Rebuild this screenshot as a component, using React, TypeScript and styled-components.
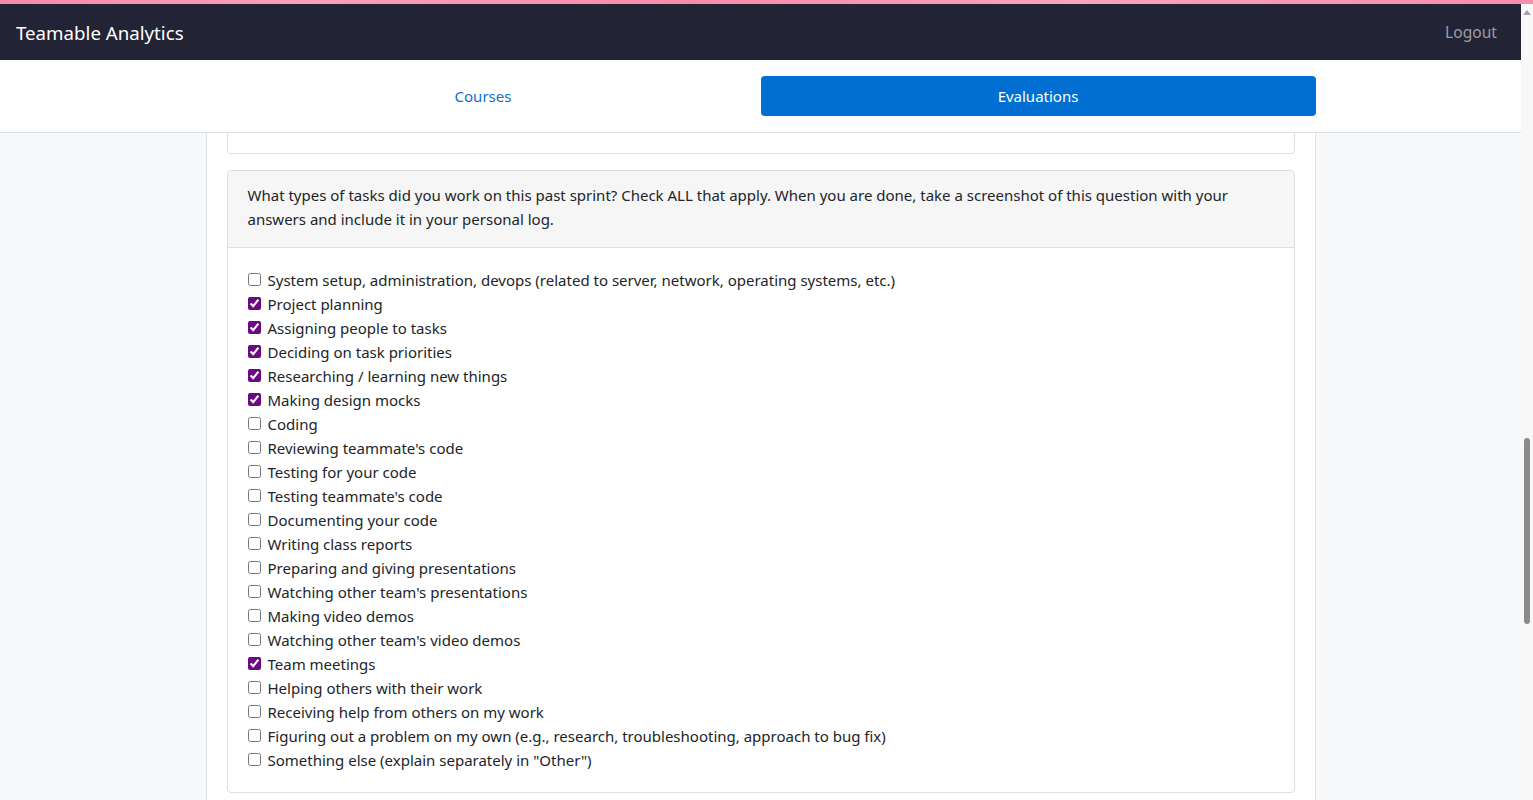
import React from "react";
import styled, { createGlobalStyle } from "styled-components";

const GlobalStyle = createGlobalStyle`
  html, body {
    margin: 0;
    padding: 0;
    height: 100%;
    overflow: hidden;
  }
  body {
    font-family: "Noto Sans", "Open Sans", sans-serif;
    color: #212529;
    background: #f8f9fa;
  }
`;

const Stripe = styled.div`
  height: 4px;
  background: linear-gradient(90deg, #f48aaa, #f9a0bb 20%, #f58caa 45%, #f9a3bd 70%, #f58dac);
`;

const Frame = styled.div`
  display: flex;
  height: 796px;
`;

const Main = styled.div`
  flex: 1;
  display: flex;
  flex-direction: column;
  overflow: hidden;
`;

const NavBar = styled.div`
  height: 56px;
  background: #232336;
  display: flex;
  align-items: center;
  justify-content: space-between;
  padding: 0 24px 0 16px;
`;

const Brand = styled.div`
  color: #fff;
  font-size: 18.7px;
`;

const Logout = styled.a`
  color: #9b9ea6;
  font-size: 15.6px;
  cursor: pointer;
`;

const TabBar = styled.div`
  height: 72px;
  background: #fff;
  border-bottom: 1px solid #dee2e6;
  display: flex;
  justify-content: center;
  align-items: center;
`;

const Tabs = styled.div`
  width: 1110px;
  display: grid;
  grid-template-columns: 1fr 1fr;
`;

const Tab = styled.div<{ $active?: boolean }>`
  height: 40px;
  display: flex;
  align-items: center;
  justify-content: center;
  border-radius: 4px;
  font-size: 15px;
  color: ${(p) => (p.$active ? "#fff" : "#0d6fd0")};
  background: ${(p) => (p.$active ? "#006fd1" : "transparent")};
`;

const Content = styled.div`
  flex: 1;
  display: flex;
  justify-content: center;
  overflow: hidden;
`;

const Column = styled.div`
  width: 1068px;
  background: #fff;
  border-left: 1px solid #dee2e6;
  border-right: 1px solid #dee2e6;
  padding: 0 20px;
  display: flex;
  flex-direction: column;
  gap: 16px;
`;

const Card = styled.div<{ $cut?: boolean }>`
  border: 1px solid #dfdfdf;
  border-top: ${(p) => (p.$cut ? "none" : "1px solid #dfdfdf")};
  border-radius: ${(p) => (p.$cut ? "0 0 4px 4px" : "4px")};
  background: #fff;
`;

const CutFill = styled.div`
  height: 20px;
`;

const CardHeader = styled.div`
  background: #f6f6f6;
  border-bottom: 1px solid #dfdfdf;
  padding: 12px 20px 16px;
  font-size: 15px;
  line-height: 24px;
  border-radius: 4px 4px 0 0;
`;

const CardBody = styled.div`
  padding: 20px 20px 20px;
  display: flex;
  flex-direction: column;
`;

const Option = styled.label`
  display: flex;
  align-items: center;
  height: 24px;
  font-size: 15px;
`;

const Box = styled.input`
  width: 13px;
  height: 13px;
  margin: 0 7px 1px 0;
  accent-color: #6b0a80;
`;

const Scrollbar = styled.div`
  width: 12px;
  background: #f8f8f8;
  position: relative;
`;

const Arrow = styled.div`
  position: absolute;
  top: 6px;
  left: 2px;
  width: 0;
  height: 0;
  border-left: 4px solid transparent;
  border-right: 4px solid transparent;
  border-bottom: 5px solid #a3a3a3;
`;

const Thumb = styled.div`
  position: absolute;
  top: 434px;
  left: 3px;
  width: 6px;
  height: 186px;
  border-radius: 3px;
  background: #8b8b8b;
`;

const options: [string, boolean][] = [
  ["System setup, administration, devops (related to server, network, operating systems, etc.)", false],
  ["Project planning", true],
  ["Assigning people to tasks", true],
  ["Deciding on task priorities", true],
  ["Researching / learning new things", true],
  ["Making design mocks", true],
  ["Coding", false],
  ["Reviewing teammate's code", false],
  ["Testing for your code", false],
  ["Testing teammate's code", false],
  ["Documenting your code", false],
  ["Writing class reports", false],
  ["Preparing and giving presentations", false],
  ["Watching other team's presentations", false],
  ["Making video demos", false],
  ["Watching other team's video demos", false],
  ["Team meetings", true],
  ["Helping others with their work", false],
  ["Receiving help from others on my work", false],
  ["Figuring out a problem on my own (e.g., research, troubleshooting, approach to bug fix)", false],
  ['Something else (explain separately in "Other")', false],
];

export default function App() {
  return (
    <>
      <GlobalStyle />
      <Stripe />
      <Frame>
        <Main>
          <NavBar>
            <Brand>Teamable Analytics</Brand>
            <Logout>Logout</Logout>
          </NavBar>
          <TabBar>
            <Tabs>
              <Tab>Courses</Tab>
              <Tab $active>Evaluations</Tab>
            </Tabs>
          </TabBar>
          <Content>
            <Column>
              <Card $cut>
                <CutFill />
              </Card>
              <Card>
                <CardHeader>
                  What types of tasks did you work on this past sprint? Check ALL that apply. When you are done,
                  take a screenshot of this question with your answers and include it in your personal log.
                </CardHeader>
                <CardBody>
                  {options.map(([label, checked]) => (
                    <Option key={label}>
                      <Box type="checkbox" defaultChecked={checked} />
                      {label}
                    </Option>
                  ))}
                </CardBody>
              </Card>
            </Column>
          </Content>
        </Main>
        <Scrollbar>
          <Arrow />
          <Thumb />
        </Scrollbar>
      </Frame>
    </>
  );
}
